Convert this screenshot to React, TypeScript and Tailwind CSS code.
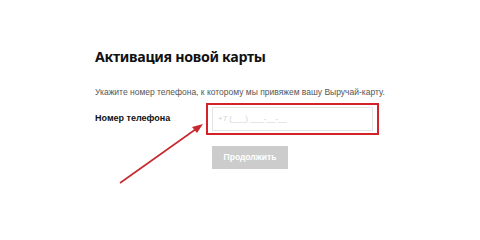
export default function App() {
  return (
    <div className="relative w-[480px] h-[239px] bg-white overflow-hidden font-['Liberation_Sans',Arial,sans-serif]">
      <div className="pl-[95px] pt-[47px]">
        <h1 className="text-[14.2px] leading-[20px] font-bold text-[#111] font-['Noto_Sans',sans-serif] tracking-[-0.3px]">
          Активация новой карты
        </h1>
        <p className="mt-[19px] text-[8.5px] leading-[12px] text-[#555]">
          Укажите номер телефона, к которому мы привяжем вашу Выручай-карту.
        </p>

        <div className="mt-[5px] flex items-center">
          <label className="w-[111px] text-[9px] font-bold text-[#111] -mt-[1px]">Номер телефона</label>
          <div className="border-2 border-[#d3222a] px-[4px] py-[2px]">
            <div className="w-[161px] h-[24px] border border-[#e4e4e4] flex items-center pl-[5px] text-[8px] text-[#d2d2d2]">
              +7 (___) ___-__-__
            </div>
          </div>
        </div>

        <div className="mt-[8px] ml-[117px]">
          <button className="w-[76px] h-[23px] bg-[#cccccc] text-white text-[8.5px] font-bold">
            Продолжить
          </button>
        </div>
      </div>

      {/* annotation arrow */}
      <svg className="absolute left-0 top-0" width="480" height="239" viewBox="0 0 480 239">
        <line x1="120" y1="183" x2="196" y2="129" stroke="#c62a30" strokeWidth="1.6" />
        <polygon points="203,124 192,127 197,133" fill="#c62a30" />
      </svg>
    </div>
  )
}
